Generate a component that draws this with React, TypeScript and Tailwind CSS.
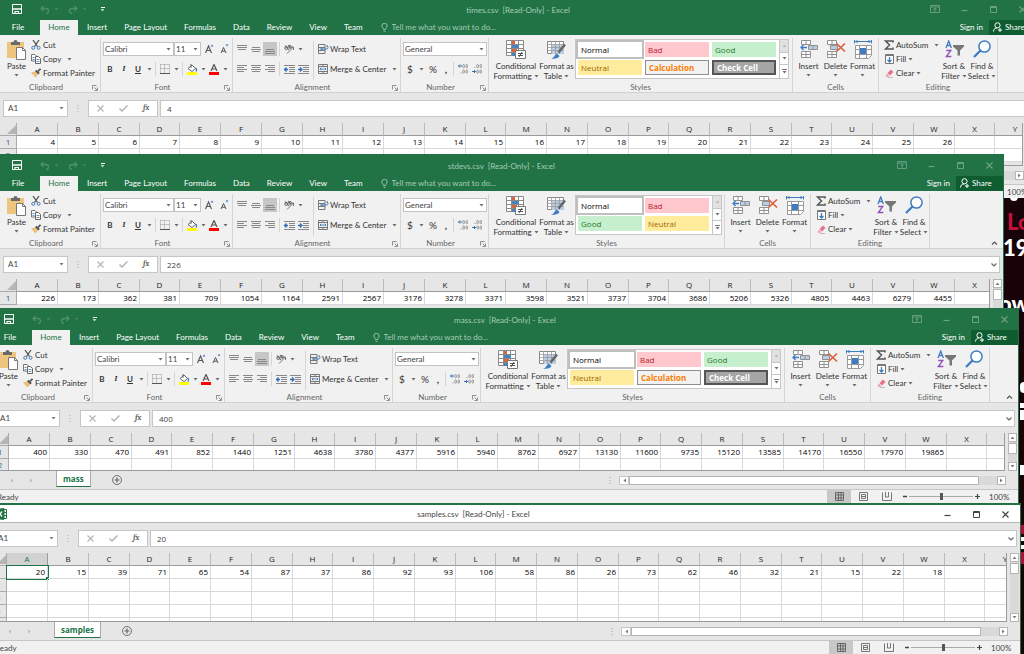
import React from 'react';
import clsx from 'clsx';

const COLUMNS = 'ABCDEFGHIJKLMNOPQRSTUVWXY'.split('');
const RIBBON_TABS = ['Insert', 'Page Layout', 'Formulas', 'Data', 'Review', 'View', 'Team'];

const TIMES = Array.from({ length: 23 }, (_, i) => i + 4);
const STDEVS = [226, 173, 362, 381, 709, 1054, 1164, 2591, 2567, 3176, 3278, 3371, 3598, 3521, 3737, 3704, 3686, 5206, 5326, 4805, 4463, 6279, 4455];
const MASS = [400, 330, 470, 491, 852, 1440, 1251, 4638, 3780, 4377, 5916, 5940, 8762, 6927, 13130, 11600, 9735, 15120, 13585, 14170, 16550, 17970, 19865];
const SAMPLES = [20, 15, 39, 71, 65, 54, 87, 37, 86, 92, 93, 106, 58, 86, 26, 73, 62, 46, 32, 21, 15, 22, 18];

type IconProps = { w: number; h: number; className?: string; children: React.ReactNode };

function Svg({ w, h, className, children }: IconProps) {
  return (
    <svg width={w} height={h} viewBox={`0 0 ${w} ${h}`} fill="none" stroke="currentColor" className={clsx('shrink-0', className)} aria-hidden="true">
      {children}
    </svg>
  );
}

function Caret({ className }: { className?: string }) {
  return (
    <Svg w={5} h={3} className={clsx('opacity-70', className)}>
      <path d="M0.500 0h4L2.500 2.600z" fill="currentColor" stroke="none" />
    </Svg>
  );
}

/* ---------- Icons ---------- */

const PasteIcon = () => (
  <Svg w={19} h={20}>
    <path d="M0 2h17v16H0z" fill="#eec57f" stroke="none" />
    <path d="M4 2h2.500a2 2 0 0 1 4 0H13v3H4z" fill="#6a6a6a" stroke="none" />
    <path d="M9.500 7.500h6l3 3v9h-9z" fill="#fff" stroke="#777" />
    <path d="M15.500 7.500v3h3" stroke="#777" />
  </Svg>
);

const CutIcon = () => (
  <Svg w={10} h={10}>
    <path d="M2 0l4.500 6.500M8 0L3.500 6.500" stroke="#555" strokeWidth="1.300" />
    <circle cx="2.200" cy="7.800" r="1.500" stroke="#4379b5" />
    <circle cx="7.600" cy="7.800" r="1.500" stroke="#4379b5" />
  </Svg>
);

const CopyIcon = () => (
  <Svg w={10} h={10}>
    <path d="M0.500 0.500h3.500l1.500 1.500v5h-5z" fill="#fff" stroke="#777" />
    <path d="M4.500 2.500h3l2 2v5h-5z" fill="#fff" stroke="#666" />
    <path d="M5.500 5.500h3M5.500 7.500h3M1.500 3.500h2M1.500 5.500h2" stroke="#4379b5" strokeWidth="0.800" />
  </Svg>
);

const PainterIcon = () => (
  <Svg w={10} h={10}>
    <path d="M0 4.500l4-1 3 3L4.500 9.500z" fill="#efbd74" stroke="none" />
    <path d="M4 3.200l1.500-1.400 3.300 3.300-1.500 1.400z" fill="#555" stroke="none" />
    <path d="M7 3.300L9.500 0.800" stroke="#555" strokeWidth="1.800" />
  </Svg>
);

const LauncherIcon = () => (
  <Svg w={6} h={6} className="text-[#777]">
    <path d="M0.500 4.500v-4h4M2.500 2.500l2.500 2.500M5.500 2.500v3h-3" strokeWidth="0.800" />
  </Svg>
);

const BordersIcon = () => (
  <Svg w={10} h={10} className="text-[#999]">
    <path d="M0.500 0.500h9v9M0.500 0.500v9M4.500 0.500v9M0.500 4.500h9" strokeDasharray="1 1" />
    <path d="M0 9.500h10" stroke="#555" />
  </Svg>
);

const FillColorIcon = () => (
  <Svg w={12} h={11}>
    <path d="M2 4.500L6 1l3.500 3.500L6 7.500z" fill="#fff" stroke="#666" />
    <path d="M5 0v4" stroke="#666" />
    <path d="M9.500 4c1.300 1 1.300 2.300.5 3.500" stroke="#4379b5" strokeWidth="1.300" />
    <path d="M1 8h10v3H1z" fill="#ffff00" stroke="none" />
  </Svg>
);

const FontColorIcon = () => (
  <Svg w={12} h={11}>
    <path d="M3 7L6 0.500 9 7M4 5h4" stroke="#555" strokeWidth="1.200" />
    <path d="M1 8h10v3H1z" fill="#fe0000" stroke="none" />
  </Svg>
);

const GrowFont = ({ shrink }: { shrink?: boolean }) => (
  <Svg w={9} h={10} className="text-[#555]">
    {shrink ? <path d="M1 9l2.500-5.500L6 9M2 7.200h3" /> : <path d="M0.500 9l3-7 3 7M1.500 6.500h4" strokeWidth="1.100" />}
    <path d={shrink ? 'M5.500 0.500h3L7 2.500z' : 'M5.500 2.500h3L7 0.500z'} fill="#4379b5" stroke="none" />
  </Svg>
);

const Lines = ({ d }: { d: string }) => (
  <Svg w={10} h={9} className="text-[#888]">
    <path d={d} />
  </Svg>
);

const OrientationIcon = () => (
  <Svg w={11} h={10} className="text-[#666]">
    <path d="M3 9.500L9.500 3M6.500 3h3v3" strokeWidth="0.900" />
    <circle cx="2.300" cy="4" r="1.500" />
    <path d="M1 1.500l4 4.500M4 1l3 3.500" strokeWidth="1.100" />
    <circle cx="6" cy="2.800" r="1.300" />
  </Svg>
);

const IndentIcon = ({ right }: { right?: boolean }) => (
  <Svg w={11} h={9} className="text-[#888]">
    <path d="M0 0.500h11M5 2.500h6M5 4.500h6M5 6.500h6M0 8.500h11" />
    {right ? <path d="M0 4.500h3M2 2.500l2 2-2 2" stroke="#2f70b8" strokeWidth="1.300" /> : <path d="M1 4.500h3M2.500 2.500l-2 2 2 2" stroke="#2f70b8" strokeWidth="1.300" />}
  </Svg>
);

const WrapIcon = () => (
  <Svg w={11} h={10}>
    <path d="M0.500 0.500h6.500v9H0.500zM0.500 3.500h6.500M0.500 6.500h6.500" stroke="#777" />
    <path d="M2 5h6.500a1.300 1.300 0 0 0 0-3H10M5 3.500L3.500 5 5 6.500" stroke="#4379b5" />
  </Svg>
);

const MergeIcon = () => (
  <Svg w={10} h={10}>
    <path d="M0.500 0.500h9v9h-9zM0.500 2.500h9M0.500 7.500h9M5 0.500v2M5 7.500v2" stroke="#777" />
    <path d="M2 5h6M3.200 3.800L2 5l1.200 1.200M6.800 3.800L8 5 6.800 6.200" stroke="#4379b5" strokeWidth="0.900" />
  </Svg>
);

const DecimalIcon = ({ more }: { more?: boolean }) => (
  <Svg w={10} h={10} className="text-[#888]">
    <rect x="4.800" y="0.500" width="1.600" height="3.200" rx="0.800" strokeWidth="0.800" />
    <rect x="8" y="0.500" width="1.600" height="3.200" rx="0.800" strokeWidth="0.800" />
    <rect x="4.800" y="6" width="1.600" height="3.200" rx="0.800" strokeWidth="0.800" />
    <rect x="8" y="6" width="1.600" height="3.200" rx="0.800" strokeWidth="0.800" />
    {more ? (
      <>
        <path d="M0.500 2h3.500M2 0.500L0.500 2 2 3.500" stroke="#2f70b8" />
        <path d="M2.500 9h1" />
      </>
    ) : (
      <>
        <path d="M0 7.500h3.500M2 6l1.500 1.500L2 9" stroke="#2f70b8" />
        <path d="M2.500 3.500h1" />
      </>
    )}
  </Svg>
);

const ConditionalIcon = () => (
  <Svg w={20} h={20}>
    <path d="M0.500 0.500h17v15H0.500zM0.500 4.500h17M0.500 8.500h17M0.500 12.500h17M5.500 0v15M12.500 0v15" fill="#fff" stroke="#8a8a8a" />
    <path d="M6 1h3v3H6zM6 9h5v3H6z" fill="#e0603a" stroke="none" />
    <path d="M6 5h7v3H6zM6 13h3v3H6z" fill="#4a82bd" stroke="none" />
    <path d="M9.500 10.500h10v8h-10z" fill="#fff" stroke="#777" />
    <path d="M12 13.500h5M12 15.500h5M16 12l-3 5" stroke="#444" strokeWidth="0.900" />
  </Svg>
);

const FormatTableIcon = () => (
  <Svg w={19} h={20}>
    <path d="M0.500 1.500h16v12h-16z" fill="#fff" stroke="#888" />
    <path d="M5 5h12v9H5z" fill="#b9cde4" stroke="none" />
    <path d="M0.500 4.500h16M0.500 7.500h16M0.500 10.500h16M4.500 1v13M8.500 1v13M12.500 1v13" stroke="#999" strokeWidth="0.800" />
    <path d="M18 4.500l-6.500 8" stroke="#666" strokeWidth="2.500" />
    <path d="M4 18.500c3.500 0 3-4 6-5l2.500 2.500c-1 2.500-4.500 3-8.500 2.500z" fill="#3f7cc0" stroke="none" />
  </Svg>
);

const InsertIcon = () => (
  <Svg w={18} h={19} className="text-[#909090]">
    <path d="M1.500 0.500h9v4h-9zM6 0.500v4M1.500 11.500h9v6h-9zM6 11.500v6M1.500 14.500h9" fill="#fff" />
    <path d="M8.500 5.500h9v4h-9zM13 5.500v4" fill="#b9cde4" />
    <path d="M1 7.500h6M3.500 5L1 7.500 3.500 10" stroke="#3f7cc0" strokeWidth="1.300" />
  </Svg>
);

const DeleteIcon = () => (
  <Svg w={20} h={19} className="text-[#909090]">
    <path d="M1.500 0.500h9v4h-9zM6 0.500v4M1.500 11.500h9v6h-9zM6 11.500v6M1.500 14.500h9" fill="#fff" />
    <path d="M4.500 5.500h7v4h-7z" fill="#b9cde4" />
    <path d="M10.500 3.500l8.500 8M19 3.500l-8.500 8" stroke="#dd5b35" strokeWidth="1.600" />
  </Svg>
);

const FormatIcon = () => (
  <Svg w={18} h={20} className="text-[#999]">
    <path d="M1.500 5.500h16v10l-3 3h-13zM1.500 9.500h16M1.500 14.500h16M5.500 5v13M12.500 5v13" fill="#fff" />
    <path d="M6 8h6v6H6z" fill="#3f7cc0" stroke="none" />
    <path d="M1 1.500h16M0.500 0v3.500M17.500 0v3.500M3.500 0L2 1.500 3.500 3M14.500 0L16 1.500 14.500 3" stroke="#3f7cc0" />
  </Svg>
);

const SigmaIcon = () => (
  <Svg w={10} h={10}>
    <path d="M9 2.500V1H1.500l4 4-4 4H9V7.500" stroke="#555" strokeWidth="1.500" />
  </Svg>
);

const FillIcon = () => (
  <Svg w={9} h={10}>
    <path d="M0.500 0.500h8v9h-8z" fill="#fff" stroke="#777" />
    <path d="M0 1.500h9" stroke="#777" />
    <path d="M4.500 3v5M2.500 6l2 2 2-2" stroke="#3f7cc0" strokeWidth="1.300" />
  </Svg>
);

const ClearIcon = () => (
  <Svg w={9} h={9}>
    <path d="M6 0.500l2.500 2.500L5 6.500 2.500 4z" fill="#e8718a" stroke="none" />
    <path d="M2 4.500L4.500 7 3 8H1.500L0.500 7z" fill="#f0a3b1" stroke="none" />
    <path d="M3 8.500h5" stroke="#999" strokeWidth="0.600" />
  </Svg>
);

const SortIcon = () => (
  <Svg w={19} h={18}>
    <path d="M1 8l2.700-7 2.700 7M2 5.500h3.500" stroke="#3f7cc0" strokeWidth="1.300" />
    <path d="M1.300 10.500h4.500l-4.500 6h5" stroke="#8f4fb8" strokeWidth="1.300" />
    <path d="M8 5h11v1.500L15 10.500v5h-2.500v-5L8 6.500z" fill="#777" stroke="none" />
  </Svg>
);

const FindIcon = () => (
  <Svg w={18} h={18}>
    <circle cx="11.500" cy="6.500" r="5.600" fill="#fff" stroke="#3f7cc0" strokeWidth="1.500" />
    <path d="M7.500 10.500L1 17" stroke="#3f7cc0" strokeWidth="2.300" />
  </Svg>
);

const SaveIcon = () => (
  <Svg w={10} h={10} className="text-white">
    <path d="M0.500 0.500h9v9h-9z" />
    <path d="M1 5h8" strokeWidth="1.500" />
    <path d="M3 10V7.500h3.500V10" strokeWidth="1.200" />
  </Svg>
);

const UndoIcon = ({ flip }: { flip?: boolean }) => (
  <Svg w={10} h={9} className={clsx('text-[#4f9068]', flip && '-scale-x-100')}>
    <path d="M1 3.500h5a2.500 2.500 0 0 1 0 5M3.500 1L1 3.500 3.500 6" strokeWidth="1.300" />
  </Svg>
);

/* ---------- Ribbon building blocks ---------- */

function Group({ label, width, launcher, children }: { label: string; width: string; launcher?: boolean; children: React.ReactNode }) {
  return (
    <section className={clsx('mt-[3px] flex h-[54px] shrink-0 flex-col border-r border-[#d5d5d5]', width)} aria-label={label}>
      <div className="flex h-[45px]">{children}</div>
      <div className="flex h-[9px] items-center leading-[9px] text-[#666]">
        <span className="flex-1 text-center">{label}</span>
        {launcher && (
          <button type="button" aria-label={`${label} settings`} className="mr-[2px]">
            <LauncherIcon />
          </button>
        )}
      </div>
    </section>
  );
}

function BigButton({ icon, lines, width, caretBelow }: { icon: React.ReactNode; lines: string[]; width: string; caretBelow?: boolean }) {
  return (
    <button type="button" className={clsx('flex shrink-0 flex-col items-center pt-[2px] leading-[10px] whitespace-nowrap', width)}>
      <span className="mb-px flex h-5 items-start">{icon}</span>
      {lines.map((line, i) => (
        <span key={line} className="flex h-[10px] items-center gap-[2px]">
          {line}
          {!caretBelow && i === lines.length - 1 && <Caret />}
        </span>
      ))}
      {caretBelow && <Caret className="mt-[3px]" />}
    </button>
  );
}

function SmallButton({ icon, label, caret, wide }: { icon: React.ReactNode; label: string; caret?: boolean; wide?: boolean }) {
  return (
    <button type="button" className="flex h-[14px] items-center whitespace-nowrap">
      <span className="mr-[2px] flex w-[10px] justify-center">{icon}</span>
      {label}
      {caret && <Caret className={wide ? 'ml-[6px]' : 'ml-[2px]'} />}
    </button>
  );
}

function ToolButton({ label, width = 'w-[14px]', active, children }: { label: string; width?: string; active?: boolean; children: React.ReactNode }) {
  return (
    <button type="button" aria-label={label} className={clsx('flex h-[14px] shrink-0 items-center justify-center', width, active && 'bg-[#c6c6c6]')}>
      {children}
    </button>
  );
}

function CaretButton({ label }: { label: string }) {
  return (
    <ToolButton label={label} width="w-[8px]">
      <Caret />
    </ToolButton>
  );
}

const Divider = () => <span className="mx-[2px] h-[14px] w-px shrink-0 bg-[#d5d5d5]" />;

function Combo({ label, value, width }: { label: string; value: string; width: string }) {
  return (
    <div className={clsx('relative h-[14px] shrink-0', width)}>
      <select aria-label={label} defaultValue={value} className="h-full w-full appearance-none border border-[#c3c3c3] bg-white pl-px leading-[12px] text-[#444]">
        <option>{value}</option>
      </select>
      <Caret className="pointer-events-none absolute top-[6px] right-[3px]" />
    </div>
  );
}

const STYLE_CELLS: Record<string, string> = {
  Normal: 'bg-white text-black outline-2 outline-[#bfbfbf]',
  Bad: 'bg-[#ffc7ce] text-[#b51c2c]',
  Good: 'bg-[#c6efce] text-[#1d7a28]',
  Neutral: 'bg-[#ffeb9c] text-[#9c6500]',
  Calculation: 'border border-[#8f8f8f] bg-[#f2f2f2] font-bold text-[#fa7d00]',
  'Check Cell': 'border-2 border-double border-[#555] bg-[#a5a5a5] font-bold text-white',
};

function StylesGallery({ compact }: { compact?: boolean }) {
  const names = compact ? ['Normal', 'Bad', 'Good', 'Neutral'] : ['Normal', 'Bad', 'Good', 'Neutral', 'Calculation', 'Check Cell'];
  return (
    <div className="mt-px flex h-10 border border-[#c6c6c6] bg-white font-['Open_Sans',sans-serif]">
      <div className={clsx('grid content-start gap-[3px] p-[2px]', compact ? 'grid-cols-[64px_64px]' : 'grid-cols-[64px_64px_64px]')}>
        {names.map((name) => (
          <button key={name} type="button" className={clsx('h-[15px] px-[3px] text-left leading-[11px]', STYLE_CELLS[name])}>
            {name}
          </button>
        ))}
      </div>
      <div className="ml-px grid w-[9px] grid-rows-3 divide-y divide-[#c6c6c6] border-l border-[#c6c6c6]">
        <button type="button" aria-label="Previous styles" className="flex items-center justify-center bg-[#e1e1e1] text-[#aaa]">
          <Caret className="rotate-180" />
        </button>
        <button type="button" aria-label="Next styles" className="flex items-center justify-center">
          <Caret />
        </button>
        <button type="button" aria-label="More styles" className="flex flex-col items-center justify-center gap-px">
          <span className="h-px w-[5px] bg-[#777]" />
          <Caret />
        </button>
      </div>
    </div>
  );
}

function Ribbon({ compact }: { compact?: boolean }) {
  return (
    <div className="flex h-[58px] overflow-hidden border-b border-[#d2d2d2] bg-[#f1f1f1] text-[#333]">
      <Group label="Clipboard" width="w-[101px]" launcher>
        <div className="pl-[3px]">
          <BigButton icon={<PasteIcon />} lines={['Paste']} width="w-[27px]" caretBelow />
        </div>
        <div className="flex flex-col pl-px">
          <SmallButton icon={<CutIcon />} label="Cut" />
          <SmallButton icon={<CopyIcon />} label="Copy" caret wide />
          <SmallButton icon={<PainterIcon />} label="Format Painter" />
        </div>
      </Group>

      <Group label="Font" width="w-[132px]" launcher>
        <div className="flex flex-col gap-[6px] pt-1 pl-[2px]">
          <div className="flex items-center">
            <Combo label="Font" value="Calibri" width="w-[71px]" />
            <Combo label="Font size" value="11" width="w-[27px]" />
            <ToolButton label="Increase font size" width="w-4"><GrowFont /></ToolButton>
            <ToolButton label="Decrease font size"><GrowFont shrink /></ToolButton>
          </div>
          <div className="flex items-center">
            <ToolButton label="Bold"><b>B</b></ToolButton>
            <ToolButton label="Italic"><i className="font-serif font-bold">I</i></ToolButton>
            <ToolButton label="Underline"><b className="underline">U</b></ToolButton>
            <CaretButton label="Underline styles" />
            <Divider />
            <ToolButton label="Borders"><BordersIcon /></ToolButton>
            <CaretButton label="Border styles" />
            <Divider />
            <ToolButton label="Fill color"><FillColorIcon /></ToolButton>
            <CaretButton label="Fill colors" />
            <ToolButton label="Font color"><FontColorIcon /></ToolButton>
            <CaretButton label="Font colors" />
          </div>
        </div>
      </Group>

      <Group label="Alignment" width="w-[168px]" launcher>
        <div className="flex w-[80px] shrink-0 flex-col gap-[6px] pt-1 pl-[2px]">
          <div className="flex items-center">
            <ToolButton label="Top align"><Lines d="M0 0.500h10M0 2.500h10M1 4.500h8" /></ToolButton>
            <ToolButton label="Middle align"><Lines d="M1 2.500h8M0 4.500h10M1 6.500h8" /></ToolButton>
            <ToolButton label="Bottom align" active><Lines d="M1 4.500h8M0 6.500h10M0 8.500h10" /></ToolButton>
            <Divider />
            <ToolButton label="Orientation"><OrientationIcon /></ToolButton>
            <CaretButton label="Orientation options" />
          </div>
          <div className="flex items-center">
            <ToolButton label="Align left"><Lines d="M0 0.500h10M0 2.500h7M0 4.500h10M0 6.500h7" /></ToolButton>
            <ToolButton label="Center"><Lines d="M0 0.500h10M1 2.500h8M0 4.500h10M1 6.500h8" /></ToolButton>
            <ToolButton label="Align right"><Lines d="M0 0.500h10M3 2.500h7M0 4.500h10M3 6.500h7" /></ToolButton>
            <Divider />
            <ToolButton label="Decrease indent"><IndentIcon /></ToolButton>
            <ToolButton label="Increase indent"><IndentIcon right /></ToolButton>
          </div>
        </div>
        <div className="my-[3px] flex flex-col gap-[6px] border-l border-[#d5d5d5] pt-px pl-1">
          <SmallButton icon={<WrapIcon />} label="Wrap Text" />
          <SmallButton icon={<MergeIcon />} label="Merge & Center" caret wide />
        </div>
      </Group>

      <Group label="Number" width="w-[88px]" launcher>
        <div className="flex flex-col gap-[6px] pt-1 pl-[2px]">
          <Combo label="Number format" value="General" width="w-[84px]" />
          <div className="flex items-center text-[10px]">
            <ToolButton label="Accounting format">$</ToolButton>
            <CaretButton label="Accounting formats" />
            <ToolButton label="Percent style" width="w-4">%</ToolButton>
            <ToolButton label="Comma style" width="w-[10px]"><b>,</b></ToolButton>
            <Divider />
            <ToolButton label="Increase decimal"><DecimalIcon more /></ToolButton>
            <ToolButton label="Decrease decimal"><DecimalIcon /></ToolButton>
          </div>
        </div>
      </Group>

      <Group label="Styles" width={compact ? 'w-[236px]' : 'w-[304px]'}>
        <div className="flex pl-[5px]">
          <BigButton icon={<ConditionalIcon />} lines={['Conditional', 'Formatting']} width="w-11" />
          <BigButton icon={<FormatTableIcon />} lines={['Format as', 'Table']} width="w-[37px]" />
          <StylesGallery compact={compact} />
        </div>
      </Group>

      <Group label="Cells" width="w-[86px]">
        <div className="flex pl-[2px]">
          <BigButton icon={<InsertIcon />} lines={['Insert']} width="w-[27px]" caretBelow />
          <BigButton icon={<DeleteIcon />} lines={['Delete']} width="w-[27px]" caretBelow />
          <BigButton icon={<FormatIcon />} lines={['Format']} width="w-[27px]" caretBelow />
        </div>
      </Group>

      <Group label="Editing" width="w-[119px]">
        <div className="flex w-[61px] shrink-0 flex-col pl-[5px]">
          <SmallButton icon={<SigmaIcon />} label="AutoSum" caret wide />
          <SmallButton icon={<FillIcon />} label="Fill" caret />
          <SmallButton icon={<ClearIcon />} label="Clear" caret />
        </div>
        <BigButton icon={<SortIcon />} lines={['Sort &', 'Filter']} width="w-[28px]" />
        <BigButton icon={<FindIcon />} lines={['Find &', 'Select']} width="w-[28px]" />
      </Group>

      <button type="button" aria-label="Collapse the ribbon" className="mr-[5px] mb-[3px] ml-auto self-end">
        <Svg w={7} h={4} className="text-[#555]"><path d="M1 3.500l2.500-2.500L6 3.500" strokeWidth="1.200" /></Svg>
      </button>
    </div>
  );
}

/* ---------- Window chrome ---------- */

function WindowButtons({ className, ribbonToggle }: { className: string; ribbonToggle?: boolean }) {
  return (
    <div className={clsx('flex items-center', className)}>
      {ribbonToggle && (
        <button type="button" aria-label="Ribbon display options" className="mr-[21px]">
          <Svg w={10} h={8}><path d="M0.500 0.500h9v7h-9zM0.500 2h9M5 7V3.500M3.500 4.500L5 3.200l1.500 1.300" strokeWidth="0.900" /></Svg>
        </button>
      )}
      <button type="button" aria-label="Minimize" className="mr-[22px]"><Svg w={7} h={7}><path d="M0.500 4.500h6" strokeWidth="1.200" /></Svg></button>
      <button type="button" aria-label="Maximize" className="mr-[22px]"><Svg w={7} h={7}><path d="M0.500 0.500h6v6h-6zM0 1.500h7" /></Svg></button>
      <button type="button" aria-label="Close"><Svg w={7} h={7}><path d="M0.500 0.500l6 6M6.500 0.500l-6 6" strokeWidth="1.200" /></Svg></button>
    </div>
  );
}

function RibbonHeader({ title }: { title: string }) {
  return (
    <header className="bg-[#217346] text-white">
      <div className="grid h-[22px] grid-cols-[1fr_auto_1fr] items-center">
        <div className="flex items-center pl-[12px]">
          <button type="button" aria-label="Save"><SaveIcon /></button>
          <button type="button" aria-label="Undo" className="ml-[18px] flex items-center gap-[4px] text-[#4f9068]"><UndoIcon /><Caret /></button>
          <button type="button" aria-label="Redo" className="ml-[9px] flex items-center gap-[4px] text-[#4f9068]"><UndoIcon flip /><Caret /></button>
          <button type="button" aria-label="Customize toolbar" className="ml-[13px] flex flex-col items-center gap-px">
            <span className="h-px w-[4px] bg-white" />
            <Caret />
          </button>
        </div>
        <h2 className="pt-[2px] whitespace-pre text-[#a5cbb4]">{title}</h2>
        <WindowButtons className="justify-end pr-[10px] text-[#6ba283]" ribbonToggle />
      </div>
      <nav className="flex h-[15px] items-center whitespace-nowrap">
        <button type="button" className="w-[36px] pb-px">File</button>
        <button type="button" className="ml-1 h-[15px] w-[38px] bg-[#f1f1f1] pb-px text-[#217346]">Home</button>
        <div className="ml-[9px] flex gap-[17px] pb-px">
          {RIBBON_TABS.map((tab) => (
            <button key={tab} type="button">{tab}</button>
          ))}
        </div>
        <label className="ml-[18px] flex flex-1 items-center gap-1 pb-px text-[#a5cbb4]">
          <Svg w={7} h={9}><path d="M2.500 6.500C2.500 5 0.800 4.500 0.800 3a2.700 2.700 0 0 1 5.400 0c0 1.500-1.700 2-1.700 3.500zM2.500 8.300h2" strokeWidth="0.900" /></Svg>
          <input aria-label="Tell me what you want to do" placeholder="Tell me what you want to do..." className="w-[130px] bg-transparent placeholder:text-[#a5cbb4]" />
        </label>
        <button type="button" className="mr-[6px] pb-px">Sign in</button>
        <button type="button" className="flex h-[15px] w-[47px] items-center gap-[3px] bg-[#0e5c2f] pb-px pl-[4px]">
          <Svg w={9} h={10}><circle cx="4.500" cy="3.300" r="2.600" /><path d="M0.500 9.500c0-2 1.200-3.300 3.500-3.500M5 8h4M7 6v4" /></Svg>
          Share
        </button>
      </nav>
    </header>
  );
}

function PlainHeader({ title }: { title: string }) {
  return (
    <header className="flex h-[20px] items-center border-t-2 border-b border-t-[#217346] border-b-[#b5b5b5] bg-white pt-px text-[#444]">
      <Svg w={14} h={12} className="ml-[3px]">
        <path d="M11 1.500h2.500v9H11zM11 4.500h3M11 7.500h3" stroke="#217346" />
        <path d="M0 1.500L11 0v12L0 10.500z" fill="#217346" stroke="none" />
        <path d="M5 3.500l4 5M9 3.500l-4 5" stroke="#fff" strokeWidth="1.300" />
      </Svg>
      <h2 className="flex-1 pr-1 text-center whitespace-pre">{title}</h2>
      <WindowButtons className="pr-[11px] text-[#444]" />
    </header>
  );
}

function FormulaBar({ value }: { value: number }) {
  return (
    <div className="flex h-[30px] items-center bg-[#e6e6e6] pr-[3px] pl-[3px] text-[#444]">
      <div className="relative h-[17px] w-[65px] border border-[#c6c6c6] bg-white">
        <input aria-label="Name box" defaultValue="A1" className="h-full w-full pl-[4px]" />
        <Caret className="absolute top-[6px] right-[3px]" />
      </div>
      <Svg w={2} h={7} className="mx-[9px] text-[#aaa]"><path d="M1 0v7" strokeWidth="1" strokeDasharray="1 2" /></Svg>
      <div className="flex h-[17px] w-[70px] items-center justify-around border border-[#c6c6c6] bg-white text-[#b5b5b5]">
        <button type="button" aria-label="Cancel"><Svg w={7} h={7}><path d="M0.500 0.500l6 6M6.500 0.500l-6 6" strokeWidth="1.200" /></Svg></button>
        <button type="button" aria-label="Enter"><Svg w={9} h={7}><path d="M0.500 3.500l2.500 2.500L8.500 0.500" strokeWidth="1.500" /></Svg></button>
        <button type="button" aria-label="Insert function" className="font-serif leading-[10px] font-bold text-[#666] italic">fx</button>
      </div>
      <div className="relative ml-[2px] h-[17px] flex-1 border border-[#c6c6c6] bg-white">
        <input aria-label="Formula bar" defaultValue={value} className="h-full w-full pl-[6px] font-['Open_Sans',sans-serif]" />
        <Svg w={6} h={4} className="absolute top-[6px] right-[2px] text-[#666]"><path d="M0.500 0.500L3 3l2.500-2.500" strokeWidth="1.200" /></Svg>
      </div>
    </div>
  );
}

type SheetProps = { values: number[]; rows: number; height: string; selected?: boolean };

function Sheet({ values, rows, height, selected }: SheetProps) {
  return (
    <div className={clsx('flex bg-[#e6e6e6]', height)}>
      <div className="min-w-0 flex-1 overflow-hidden border-r border-b border-[#9b9b9b]">
        <table className="w-[1036px] table-fixed border-separate border-spacing-0 bg-white font-['Open_Sans',sans-serif] leading-[12px]">
          <colgroup>
            <col className="w-[17px]" />
            {COLUMNS.map((c, i) => (
              <col key={c} className={i % 4 === 3 ? 'w-[40px]' : 'w-[41px]'} />
            ))}
          </colgroup>
          <thead>
            <tr>
              <th aria-label="Select all" className="h-[13px] border-r border-b border-[#ababab] bg-[#e6e6e6] p-0">
                <Svg w={9} h={9} className="ml-auto"><path d="M9 0v9H0z" fill="#b5b5b5" stroke="none" /></Svg>
              </th>
              {COLUMNS.map((c, i) => (
                <th key={c} className={clsx('h-[13px] border-r border-b p-0 font-normal', selected && i === 0 ? 'border-r-[#9b9b9b] border-b-[#217346] bg-[#d2d2d2] text-[#217346]' : 'border-r-[#bbb] border-b-[#9b9b9b] bg-[#e6e6e6] text-[#222]')}>
                  {c}
                </th>
              ))}
            </tr>
          </thead>
          <tbody>
            {Array.from({ length: rows }, (_, r) => (
              <tr key={r}>
                <th className="h-[13px] border-r border-b border-[#ababab] bg-[#e6e6e6] p-0 font-normal text-[#2f5f86]">{r + 1}</th>
                {COLUMNS.map((c, i) => (
                  <td key={c} className={clsx('relative h-[13px] border-r border-b border-[#d9d9d9] p-0 pr-[2px] text-right text-black', selected && r === 0 && i === 0 && 'outline outline-[#217346]')}>
                    {r === 0 ? values[i] : ''}
                    {selected && r === 0 && i === 0 && <span className="absolute -right-[2px] -bottom-[2px] h-[3px] w-[3px] bg-[#217346]" />}
                  </td>
                ))}
              </tr>
            ))}
          </tbody>
        </table>
      </div>
      <div className="mr-px ml-[3px] flex w-[9px] flex-col bg-[#d9d9d9]">
        <button type="button" aria-label="Scroll up" className="flex h-[9px] items-center justify-center border border-[#b5b5b5] bg-white text-[#444]"><Caret className="rotate-180" /></button>
        <div className="mt-px h-[11px] border border-[#b5b5b5] bg-white" />
        <button type="button" aria-label="Scroll down" className="mt-auto flex h-[9px] items-center justify-center border border-[#b5b5b5] bg-white text-[#444]"><Caret /></button>
      </div>
    </div>
  );
}

function SheetTabs({ name }: { name?: string }) {
  return (
    <div className="flex h-[18px] bg-[#e6e6e6]">
      <div className="flex w-[64px] items-center gap-[15px] pl-[17px] text-[#aaa]">
        <button type="button" aria-label="Previous sheet"><Caret className="rotate-90" /></button>
        <button type="button" aria-label="Next sheet"><Caret className="-rotate-90" /></button>
      </div>
      {name && (
        <button type="button" className="h-[16px] border-x border-b border-x-[#ababab] border-b-[#217346] bg-white px-[6px] font-['Open_Sans',sans-serif] font-bold text-[#217346]">{name}</button>
      )}
      <button type="button" aria-label="New sheet" className="ml-[21px]">
        <Svg w={10} h={10} className="text-[#666]"><circle cx="5" cy="5" r="4.500" strokeWidth="0.900" /><path d="M2.500 5h5M5 2.500v5" strokeWidth="1.200" /></Svg>
      </button>
      <div className="mr-[12px] ml-auto flex w-[397px] items-center">
        <Svg w={2} h={7} className="mr-[8px] text-[#999]"><path d="M1 0v7" strokeDasharray="1 2" /></Svg>
        <button type="button" aria-label="Scroll left" className="flex h-[9px] w-[10px] items-center justify-center border border-[#c6c6c6] bg-white text-[#444]"><Caret className="rotate-90" /></button>
        <div className="flex h-[9px] flex-1 bg-[#d9d9d9]">
          <div className="w-[95%] border border-[#b5b5b5] bg-white" />
        </div>
        <button type="button" aria-label="Scroll right" className="flex h-[9px] w-[9px] items-center justify-center border border-[#b5b5b5] bg-white text-[#444]"><Caret className="-rotate-90" /></button>
      </div>
    </div>
  );
}

function StatusBar({ ready }: { ready: boolean }) {
  return (
    <footer className="flex h-[14px] items-center border-t border-[#c6c6c6] bg-[#f1f1f1] pl-[5px] leading-[10px] text-[#444]">
      <span className="mr-auto">{ready && 'Ready'}</span>
      <button type="button" aria-label="Normal view" className="flex h-full w-6 items-center justify-center bg-[#c8c8c8]">
        <Svg w={9} h={9} className="text-[#666]"><path d="M0.500 0.500h8v8h-8zM3.500 0v9M6 0v9M0 3h9M0 6h9" /></Svg>
      </button>
      <button type="button" aria-label="Page layout view" className="flex h-full w-6 items-center justify-center">
        <Svg w={9} h={9} className="text-[#777]"><path d="M0.500 0.500h8v8h-8zM2.500 2.500h4v4h-4zM3 4.500h3" /></Svg>
      </button>
      <button type="button" aria-label="Page break view" className="flex h-full w-6 items-center justify-center">
        <Svg w={10} h={9} className="text-[#777]"><path d="M0.500 0.500v8h9v-8M3.500 0v5h3V0" /></Svg>
      </button>
      <button type="button" aria-label="Zoom out" className="w-[10px]"><Svg w={10} h={7}><path d="M4 3.500h4" strokeWidth="1.500" /></Svg></button>
      <input
        type="range"
        aria-label="Zoom"
        className="h-[8px] w-[64px] appearance-none bg-transparent [&::-webkit-slider-runnable-track]:h-px [&::-webkit-slider-runnable-track]:bg-[#aaa] [&::-webkit-slider-thumb]:-mt-[3px] [&::-webkit-slider-thumb]:h-[7px] [&::-webkit-slider-thumb]:w-[3px] [&::-webkit-slider-thumb]:appearance-none [&::-webkit-slider-thumb]:bg-[#555]"
      />
      <button type="button" aria-label="Zoom in" className="w-[16px]"><Svg w={10} h={7}><path d="M2 3.500h5M4.500 1v5" strokeWidth="1.200" /></Svg></button>
      <span className="w-[29px]">100%</span>
    </footer>
  );
}

type WindowProps = SheetProps & { title: string; name?: string; place: string; compact?: boolean; plain?: boolean; footer?: boolean };

function ExcelWindow({ title, name, place, compact, plain, footer = true, ...sheet }: WindowProps) {
  return (
    <article className={clsx('absolute overflow-hidden border-r border-[#217346] bg-[#e6e6e6]', place)}>
      {plain ? <PlainHeader title={title} /> : <RibbonHeader title={title} />}
      {!plain && <Ribbon compact={compact} />}
      <FormulaBar value={sheet.values[0]} />
      <Sheet {...sheet} />
      {footer && <SheetTabs name={name} />}
      {footer && <StatusBar ready={name !== undefined} />}
    </article>
  );
}

/* Web page that shows on the desktop behind the workbooks */
function Backdrop() {
  return (
    <div className="absolute inset-y-0 right-0 w-[20px] overflow-hidden bg-[#170308] pt-[197px] font-['Lato'] text-[22px] leading-[26px] font-black text-white">
      <div className="ml-[6px] h-[4px] w-[8px] rounded-b-full bg-white" />
      <p className="mt-[8px] pl-[3px] text-[#c4103c]">Lo</p>
      <p className="-ml-px">19</p>
      <p className="mt-[30px] -ml-[5px]">ow</p>
      <div className="mt-[65px] ml-auto h-[11px] w-[4px] rounded-l-full bg-white" />
      <div className="mt-[10px] ml-auto h-[5px] w-[4px] bg-white" />
      <div className="mt-[2px] ml-auto h-[10px] w-[4px] bg-white" />
      <div className="mt-[45px] ml-auto h-[10px] w-[4px] bg-white" />
      <div className="mt-[50px] ml-auto h-[9px] w-[4px] bg-[#b00d38]" />
      <div className="my-[3px] ml-auto h-[12px] w-[4px] border-y-4 border-white" />
      <div className="ml-auto h-[12px] w-[4px] bg-[#b00d38]" />
    </div>
  );
}

export default function App() {
  return (
    <main className="relative min-h-screen overflow-hidden bg-[#170308] font-['Lato',sans-serif] text-[8px] leading-[12px]">
      <Backdrop />
      <ExcelWindow title="times.csv  [Read-Only] - Excel" values={TIMES} rows={2} height="h-[43px]" place="-top-[2px] left-0 -right-[13px]" />
      <ExcelWindow title="stdevs.csv  [Read-Only] - Excel" values={STDEVS} rows={1} height="h-[39px]" place="top-[154px] left-0 right-[20px]" compact footer={false} />
      <ExcelWindow title="mass.csv  [Read-Only] - Excel" name="mass" values={MASS} rows={2} height="h-[38px]" place="top-[308px] -left-2 right-[5px]" />
      <ExcelWindow title="samples.csv  [Read-Only] - Excel" name="samples" values={SAMPLES} rows={5} height="h-[69px]" place="top-[503px] -left-[10px] right-[3px]" plain selected />
    </main>
  );
}
